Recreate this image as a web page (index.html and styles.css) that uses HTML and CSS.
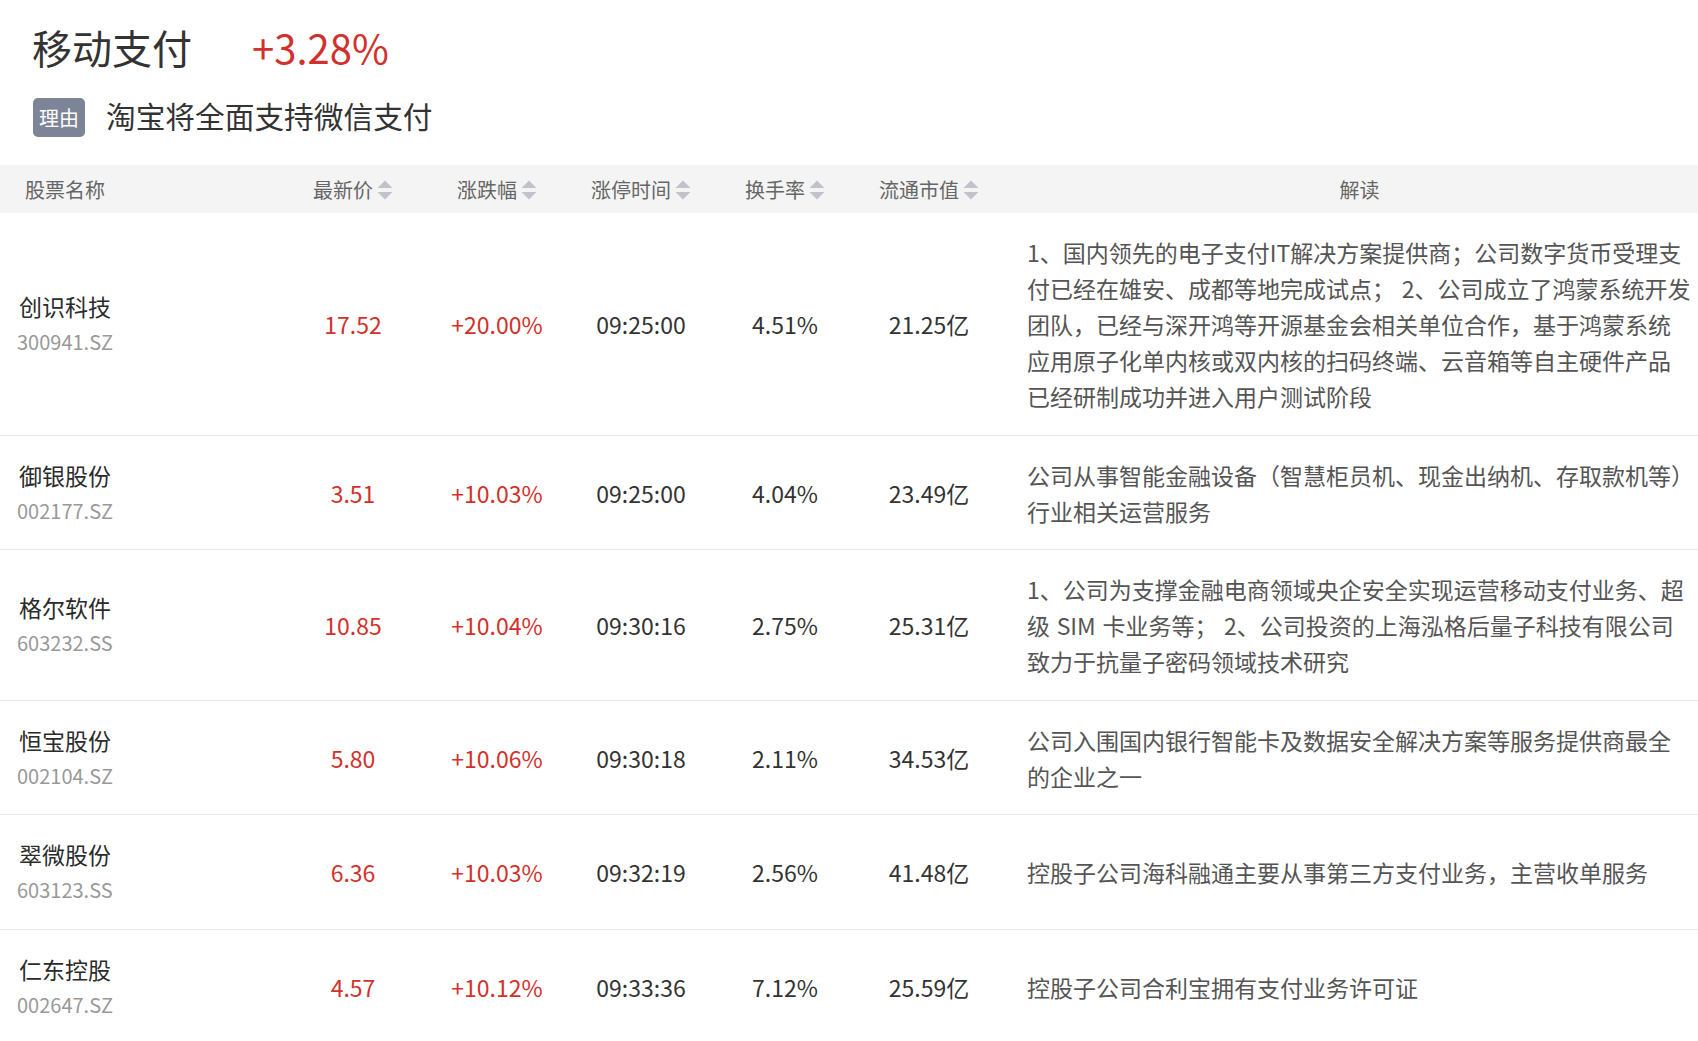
FILE: index.html
```html
<!DOCTYPE html>
<html lang="zh-CN">
<head>
<meta charset="utf-8">
<title>移动支付</title>
<link rel="stylesheet" href="styles.css">
</head>
<body>
<div class="page">
  <div class="topic">
    <div class="title-row">
      <span class="title">移动支付</span>
      <span class="title-pct up">+3.28%</span>
    </div>
    <div class="reason-row">
      <span class="badge">理由</span>
      <span class="reason">淘宝将全面支持微信支付</span>
    </div>
  </div>

  <div class="table">
    <div class="row head">
      <div class="cell name-col">股票名称</div>
      <div class="cell num"><span>最新价</span><svg class="sort" viewBox="0 0 16 20" width="16" height="20"><polygon points="0.5,8 8,0.5 15.5,8"/><polygon points="0.5,12 8,19.5 15.5,12"/></svg></div>
      <div class="cell num"><span>涨跌幅</span><svg class="sort" viewBox="0 0 16 20" width="16" height="20"><polygon points="0.5,8 8,0.5 15.5,8"/><polygon points="0.5,12 8,19.5 15.5,12"/></svg></div>
      <div class="cell num"><span>涨停时间</span><svg class="sort" viewBox="0 0 16 20" width="16" height="20"><polygon points="0.5,8 8,0.5 15.5,8"/><polygon points="0.5,12 8,19.5 15.5,12"/></svg></div>
      <div class="cell num"><span>换手率</span><svg class="sort" viewBox="0 0 16 20" width="16" height="20"><polygon points="0.5,8 8,0.5 15.5,8"/><polygon points="0.5,12 8,19.5 15.5,12"/></svg></div>
      <div class="cell num"><span>流通市值</span><svg class="sort" viewBox="0 0 16 20" width="16" height="20"><polygon points="0.5,8 8,0.5 15.5,8"/><polygon points="0.5,12 8,19.5 15.5,12"/></svg></div>
      <div class="cell desc">解读</div>
    </div>

    <div class="row item">
      <div class="cell name-col"><div class="name">创识科技</div><div class="code">300941.SZ</div></div>
      <div class="cell num up">17.52</div>
      <div class="cell num up">+20.00%</div>
      <div class="cell num">09:25:00</div>
      <div class="cell num">4.51%</div>
      <div class="cell num">21.25亿</div>
      <div class="cell desc">1、国内领先的电子支付IT解决方案提供商；公司数字货币受理支付已经在雄安、成都等地完成试点； 2、公司成立了鸿蒙系统开发团队，已经与深开鸿等开源基金会相关单位合作，基于鸿蒙系统应用原子化单内核或双内核的扫码终端、云音箱等自主硬件产品已经研制成功并进入用户测试阶段</div>
    </div>

    <div class="row item">
      <div class="cell name-col"><div class="name">御银股份</div><div class="code">002177.SZ</div></div>
      <div class="cell num up">3.51</div>
      <div class="cell num up">+10.03%</div>
      <div class="cell num">09:25:00</div>
      <div class="cell num">4.04%</div>
      <div class="cell num">23.49亿</div>
      <div class="cell desc">公司从事智能金融设备（智慧柜员机、现金出纳机、存取款机等）行业相关运营服务</div>
    </div>

    <div class="row item">
      <div class="cell name-col"><div class="name">格尔软件</div><div class="code">603232.SS</div></div>
      <div class="cell num up">10.85</div>
      <div class="cell num up">+10.04%</div>
      <div class="cell num">09:30:16</div>
      <div class="cell num">2.75%</div>
      <div class="cell num">25.31亿</div>
      <div class="cell desc">1、公司为支撑金融电商领域央企安全实现运营移动支付业务、超级 SIM 卡业务等； 2、公司投资的上海泓格后量子科技有限公司致力于抗量子密码领域技术研究</div>
    </div>

    <div class="row item">
      <div class="cell name-col"><div class="name">恒宝股份</div><div class="code">002104.SZ</div></div>
      <div class="cell num up">5.80</div>
      <div class="cell num up">+10.06%</div>
      <div class="cell num">09:30:18</div>
      <div class="cell num">2.11%</div>
      <div class="cell num">34.53亿</div>
      <div class="cell desc">公司入围国内银行智能卡及数据安全解决方案等服务提供商最全的企业之一</div>
    </div>

    <div class="row item">
      <div class="cell name-col"><div class="name">翠微股份</div><div class="code">603123.SS</div></div>
      <div class="cell num up">6.36</div>
      <div class="cell num up">+10.03%</div>
      <div class="cell num">09:32:19</div>
      <div class="cell num">2.56%</div>
      <div class="cell num">41.48亿</div>
      <div class="cell desc">控股子公司海科融通主要从事第三方支付业务，主营收单服务</div>
    </div>

    <div class="row item">
      <div class="cell name-col"><div class="name">仁东控股</div><div class="code">002647.SZ</div></div>
      <div class="cell num up">4.57</div>
      <div class="cell num up">+10.12%</div>
      <div class="cell num">09:33:36</div>
      <div class="cell num">7.12%</div>
      <div class="cell num">25.59亿</div>
      <div class="cell desc">控股子公司合利宝拥有支付业务许可证</div>
    </div>
  </div>
</div>
</body>
</html>
```

FILE: styles.css
```css
html, body {
  margin: 0;
  padding: 0;
  background: #ffffff;
}

body {
  font-family: "Noto Sans CJK SC", "Noto Sans", sans-serif;
  color: #333333;
  overflow: hidden;
}

.page {
  width: 100%;
}

.topic {
  padding-left: 32px;
  margin-bottom: 28px;
}

.title-row {
  box-sizing: border-box;
  height: 98px;
  padding-bottom: 4px;
  display: flex;
  align-items: center;
}

.title {
  font-size: 40px;
  line-height: 1;
  color: #333333;
}

.title-pct {
  font-size: 40px;
  line-height: 1;
  margin-left: 60px;
}

.up {
  color: #d1312c;
}

.reason-row {
  height: 39px;
  display: flex;
  align-items: center;
  padding-left: 1px;
}

.badge {
  width: 52px;
  height: 39px;
  border-radius: 5px;
  background: #7e8497;
  color: #ffffff;
  font-size: 20px;
  line-height: 39px;
  text-align: center;
}

.reason {
  margin-left: 21px;
  padding-bottom: 4px;
  font-size: 29.7px;
  line-height: 1;
  color: #333333;
}

.row {
  display: grid;
  grid-template-columns: 281px repeat(5, 144px) 1fr;
  align-items: center;
}

.head {
  box-sizing: border-box;
  height: 48px;
  padding-top: 2px;
  background: #f4f4f4;
  color: #666666;
  font-size: 20px;
  line-height: 1;
}

.head .name-col {
  padding-left: 25px;
}

.item {
  padding: 21px 0 20.5px;
  border-bottom: 1px solid #e8e8e8;
  font-size: 23px;
  line-height: 36px;
  color: #333333;
}

.item .name-col {
  padding-left: 17px;
}

.name {
  font-size: 23px;
  color: #2b2b2b;
  padding-left: 2px;
}

.code {
  font-size: 20px;
  color: #999999;
}

.num {
  display: flex;
  justify-content: center;
  align-items: center;
  text-align: center;
}

.item .num.up {
  color: #d1312c;
}

.sort {
  margin-left: 4px;
  fill: #c0c3c9;
  flex: none;
}

.desc {
  padding: 0 6px 0 26px;
}

.item .desc {
  color: #555555;
  word-spacing: 1.5px;
}

.head .desc {
  text-align: center;
}
```
